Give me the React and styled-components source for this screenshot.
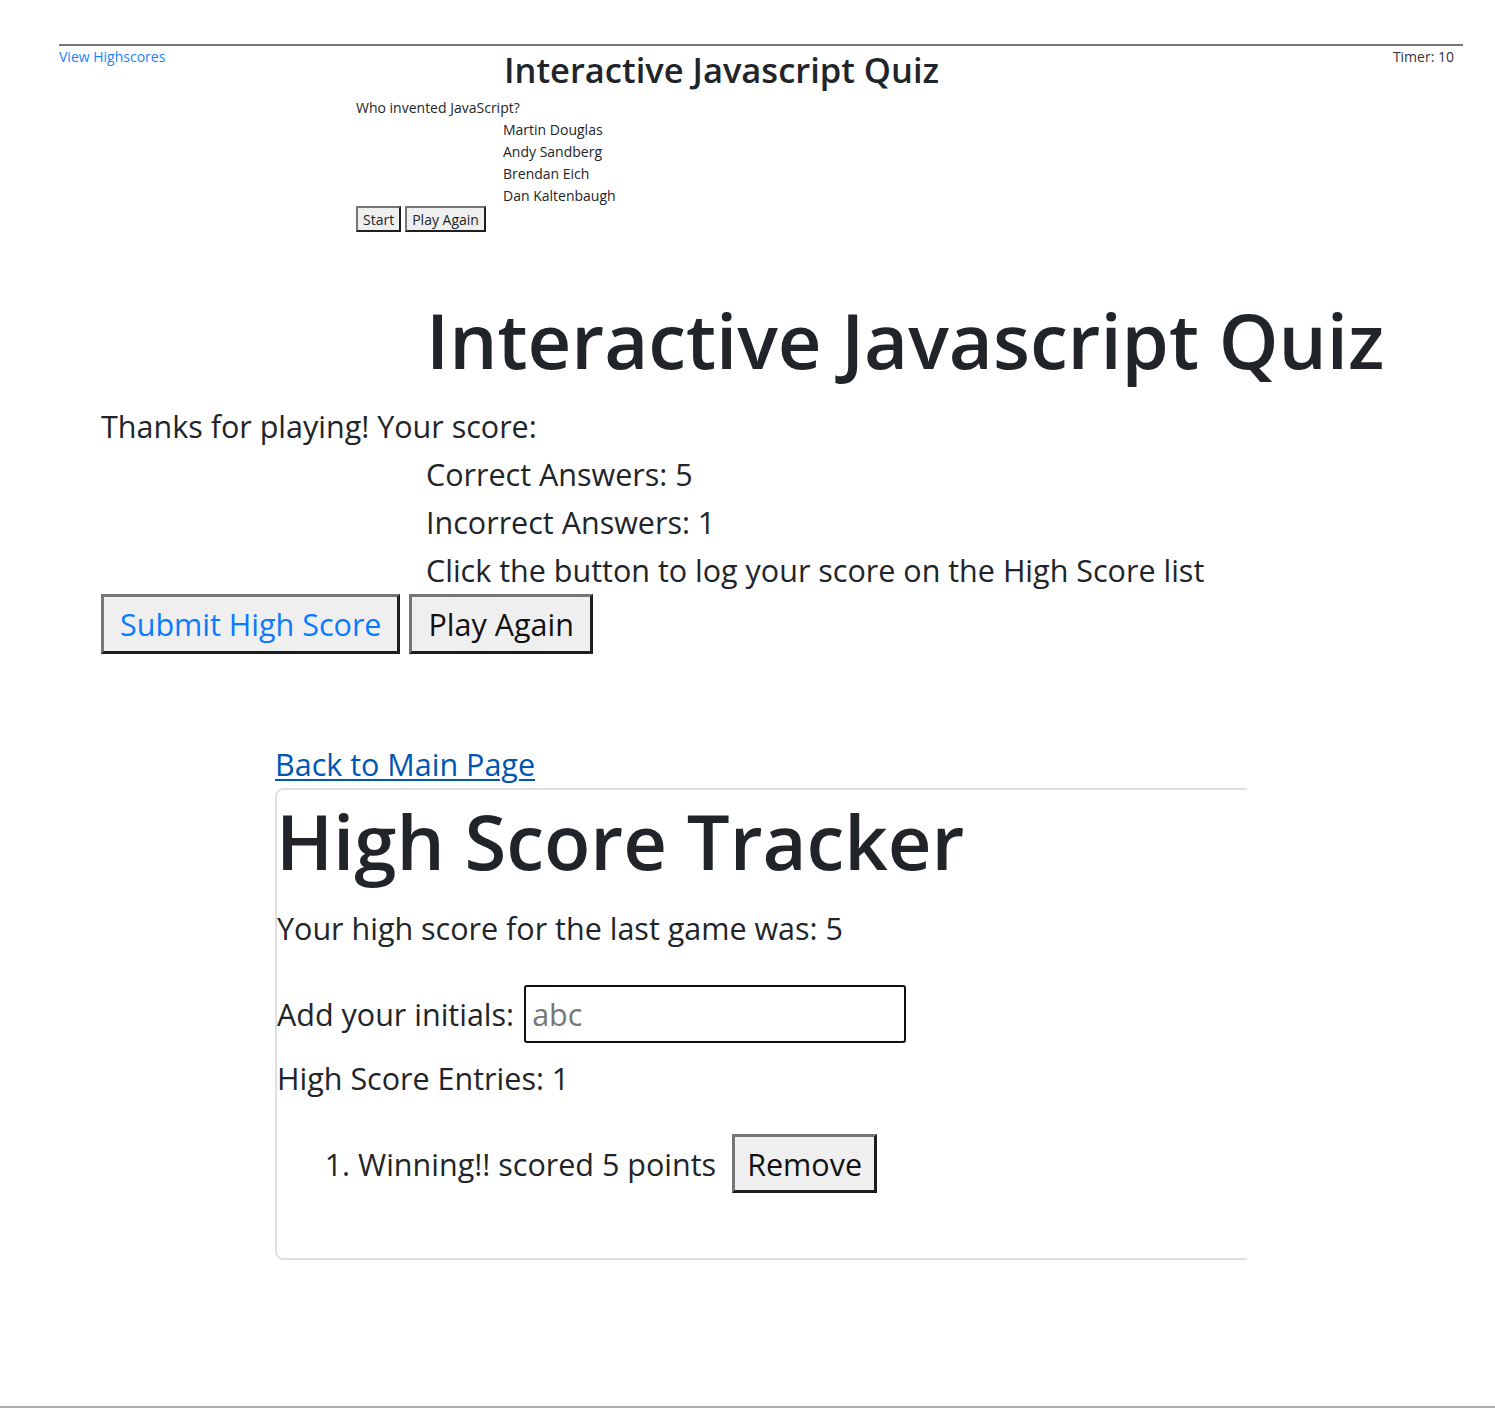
import React from 'react';
import styled, { createGlobalStyle } from 'styled-components';

const GlobalStyle = createGlobalStyle`
  html, body { margin: 0; padding: 0; background: #fff; }
  body {
    font-family: "Open Sans", "Noto Sans", "Liberation Sans", sans-serif;
    color: #212529;
  }
  * { box-sizing: border-box; }
`;

const Page = styled.div`
  min-height: 1408px;
  padding-top: 44px;
  border-bottom: 2px solid #ababab;
`;

/* ---------- mini quiz (top) ---------- */
const MiniQuiz = styled.section`
  margin-left: 59px;
  width: 1404px;
  border-top: 2px solid #777;
`;

const HeaderRow = styled.header`
  display: flex;
  align-items: flex-start;
`;

const HighscoresLink = styled.a`
  flex: 0 0 445px;
  padding-top: 1px;
  font-size: 14px;
  line-height: 20px;
  color: #1a82ff;
  text-decoration: none;
`;

const MiniTitle = styled.h1`
  margin: 2px 0 0;
  font-size: 34.5px;
  font-weight: 600;
  line-height: 43px;
`;

const Timer = styled.div`
  margin-left: auto;
  padding: 1px 9px 0 0;
  font-size: 14px;
  line-height: 20px;
  color: #333;
`;

const QuestionBlock = styled.div`
  margin: 6px 0 0 297px;
  font-size: 14px;
  line-height: 22px;
`;

const AnswerList = styled.ul`
  margin: 0;
  padding-left: 147px;
  list-style: none;
`;

const MiniButtons = styled.div`
  display: flex;
  gap: 4px;
  margin-top: -1px;
`;

const MiniButton = styled.button`
  height: 26px;
  padding: 0 5px;
  font-family: inherit;
  font-size: 14px;
  color: #212529;
  background: #efefef;
  border: 2px solid;
  border-color: #767676 #1e1e1e #1e1e1e #767676;
`;

/* ---------- result ---------- */
const ResultSection = styled.section`
  margin-top: 62px;
  padding-left: 101px;
`;

const BigTitle = styled.h1`
  margin: 0 0 0 325px;
  font-size: 76px;
  font-weight: 600;
  line-height: 92px;
`;

const BodyLine = styled.p`
  margin: ${(p) => p.$top || 0}px 0 0 ${(p) => p.$indent || 0}px;
  font-size: 30.5px;
  line-height: 48px;
`;

const BigButtonRow = styled.div`
  display: flex;
  gap: 9px;
`;

const BigButton = styled.button`
  height: ${(p) => p.$h || 60}px;
  padding: 0 ${(p) => p.$pad || 16}px;
  font-family: inherit;
  font-size: 30.5px;
  color: ${(p) => p.$color || '#111'};
  background: #efefef;
  border: 3px solid;
  border-color: #767676 #1e1e1e #1e1e1e #767676;
`;

/* ---------- tracker ---------- */
const TrackerSection = styled.section`
  margin: 86px 0 0 275px;
`;

const BackLink = styled.a`
  display: inline-block;
  font-size: 30.5px;
  line-height: 48px;
  color: #0056b3;
  text-decoration: underline;
  text-underline-offset: 3px;
  text-decoration-thickness: 2px;
`;

const CardClip = styled.div`
  width: 972px;
  overflow: hidden;
`;

const Card = styled.div`
  width: 1200px;
  height: 472px;
  border: 2px solid #dfdfdf;
  border-radius: 8px;
`;

const TrackerTitle = styled.h1`
  margin: 4px 0 0 -1px;
  font-size: 76px;
  font-weight: 600;
  line-height: 94px;
`;

const InitialsRow = styled.div`
  display: flex;
  align-items: center;
  gap: 10px;
  margin-top: 33px;
  font-size: 30.5px;
`;

const InitialsInput = styled.input`
  width: 382px;
  height: 58px;
  padding: 0 6px;
  font-family: inherit;
  font-size: 30.5px;
  color: #212529;
  border: 2px solid #101010;
  border-radius: 3px;
  outline: none;
  &::placeholder { color: #777; }
`;

const ScoreList = styled.ol`
  margin: 32px 0 0;
  padding-left: 81px;
  font-size: 30.5px;
  line-height: 48px;
`;

const EntryRow = styled.span`
  display: inline-flex;
  align-items: center;
  gap: 16px;
`;

export default function App() {
  return (
    <>
      <GlobalStyle />
      <Page>
        <MiniQuiz>
          <HeaderRow>
            <HighscoresLink href="#">View Highscores</HighscoresLink>
            <MiniTitle>Interactive Javascript Quiz</MiniTitle>
            <Timer>Timer: 10</Timer>
          </HeaderRow>
          <QuestionBlock>
            <div>Who invented JavaScript?</div>
            <AnswerList>
              <li>Martin Douglas</li>
              <li>Andy Sandberg</li>
              <li>Brendan Eich</li>
              <li>Dan Kaltenbaugh</li>
            </AnswerList>
            <MiniButtons>
              <MiniButton>Start</MiniButton>
              <MiniButton>Play Again</MiniButton>
            </MiniButtons>
          </QuestionBlock>
        </MiniQuiz>

        <ResultSection>
          <BigTitle>Interactive Javascript Quiz</BigTitle>
          <BodyLine $top={16}>Thanks for playing! Your score:</BodyLine>
          <BodyLine $indent={325}>Correct Answers: 5</BodyLine>
          <BodyLine $indent={325}>Incorrect Answers: 1</BodyLine>
          <BodyLine $indent={325}>Click the button to log your score on the High Score list</BodyLine>
          <BigButtonRow>
            <BigButton $color="#0a7bff">Submit High Score</BigButton>
            <BigButton>Play Again</BigButton>
          </BigButtonRow>
        </ResultSection>

        <TrackerSection>
          <BackLink href="#">Back to Main Page</BackLink>
          <CardClip>
            <Card>
              <TrackerTitle>High Score Tracker</TrackerTitle>
              <BodyLine $top={16}>Your high score for the last game was: 5</BodyLine>
              <InitialsRow>
                <span>Add your initials:</span>
                <InitialsInput placeholder="abc" autoFocus />
              </InitialsRow>
              <BodyLine $top={11}>High Score Entries: 1</BodyLine>
              <ScoreList>
                <li>
                  <EntryRow>
                    Winning!! scored 5 points
                    <BigButton $h={59} $pad={12}>Remove</BigButton>
                  </EntryRow>
                </li>
              </ScoreList>
            </Card>
          </CardClip>
        </TrackerSection>
      </Page>
    </>
  );
}
